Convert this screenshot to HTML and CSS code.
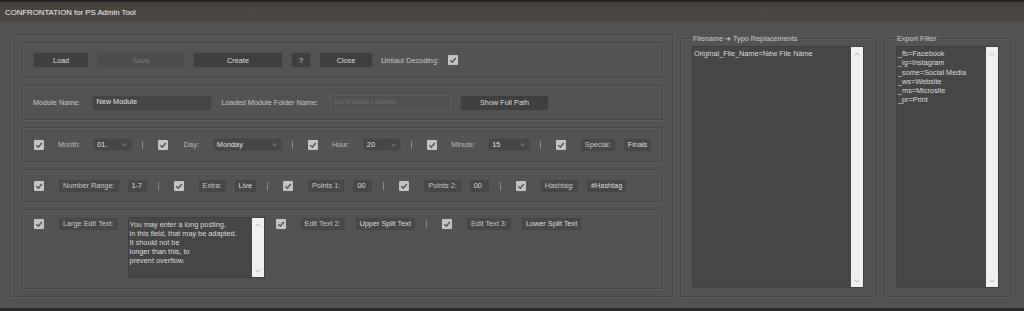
FILE: index.html
```html
<!DOCTYPE html>
<html lang="en">
<head>
    <meta charset="UTF-8">
    <title>CONFRONTATION for PS Admin Tool</title>
    <link rel="stylesheet" href="styles.css">
</head>
<body>
    <div class="titlebar">CONFRONTATION for PS Admin Tool</div>

    <div class="workspace">
        <div class="editor">
            <div class="row row-1">
                <button class="btn btn-load">Load</button>
                <button class="btn btn-save" disabled>Save</button>
                <button class="btn btn-create">Create</button>
                <button class="btn btn-help">?</button>
                <button class="btn btn-close">Close</button>
                <span class="label">Umlaut Decoding:</span>
                <span class="cb cb-umlaut"><svg viewBox="0 0 10 10"><polyline points="2.3,5.2 4.3,7.2 7.8,3"/></svg></span>
            </div>

            <div class="row row-2">
                <span class="label">Module Name:</span>
                <div class="field field-name">New Module</div>
                <span class="label">Loaded Module Folder Name:</span>
                <div class="field field-folder">No Module Loaded.</div>
                <button class="btn btn-path">Show Full Path</button>
            </div>

            <div class="row row-3">
                <span class="cb"><svg viewBox="0 0 10 10"><polyline points="2.3,5.2 4.3,7.2 7.8,3"/></svg></span>
                <span class="label opt">Month:</span>
                <div class="select sel-month">01.<svg viewBox="0 0 6 4"><polyline points="0.5,0.5 3,3 5.5,0.5"/></svg></div>
                <span class="sep"></span>
                <span class="cb"><svg viewBox="0 0 10 10"><polyline points="2.3,5.2 4.3,7.2 7.8,3"/></svg></span>
                <span class="label opt opt-day">Day:</span>
                <div class="select sel-day">Monday<svg viewBox="0 0 6 4"><polyline points="0.5,0.5 3,3 5.5,0.5"/></svg></div>
                <span class="sep"></span>
                <span class="cb"><svg viewBox="0 0 10 10"><polyline points="2.3,5.2 4.3,7.2 7.8,3"/></svg></span>
                <span class="label opt">Hour:</span>
                <div class="select sel-hour">20<svg viewBox="0 0 6 4"><polyline points="0.5,0.5 3,3 5.5,0.5"/></svg></div>
                <span class="sep"></span>
                <span class="cb"><svg viewBox="0 0 10 10"><polyline points="2.3,5.2 4.3,7.2 7.8,3"/></svg></span>
                <span class="label opt">Minute:</span>
                <div class="select sel-minute">15<svg viewBox="0 0 6 4"><polyline points="0.5,0.5 3,3 5.5,0.5"/></svg></div>
                <span class="sep"></span>
                <span class="cb"><svg viewBox="0 0 10 10"><polyline points="2.3,5.2 4.3,7.2 7.8,3"/></svg></span>
                <span class="tag">Special:</span>
                <span class="val">Finals</span>
            </div>

            <div class="row row-4">
                <span class="cb"><svg viewBox="0 0 10 10"><polyline points="2.3,5.2 4.3,7.2 7.8,3"/></svg></span>
                <span class="tag">Number Range:</span>
                <span class="val">1-7</span>
                <span class="sep"></span>
                <span class="cb"><svg viewBox="0 0 10 10"><polyline points="2.3,5.2 4.3,7.2 7.8,3"/></svg></span>
                <span class="tag">Extra:</span>
                <span class="val">Live</span>
                <span class="sep"></span>
                <span class="cb"><svg viewBox="0 0 10 10"><polyline points="2.3,5.2 4.3,7.2 7.8,3"/></svg></span>
                <span class="tag">Points 1:</span>
                <span class="val">00</span>
                <span class="sep"></span>
                <span class="cb"><svg viewBox="0 0 10 10"><polyline points="2.3,5.2 4.3,7.2 7.8,3"/></svg></span>
                <span class="tag">Points 2:</span>
                <span class="val">00</span>
                <span class="sep"></span>
                <span class="cb"><svg viewBox="0 0 10 10"><polyline points="2.3,5.2 4.3,7.2 7.8,3"/></svg></span>
                <span class="tag">Hashtag:</span>
                <span class="val">#Hashtag</span>
            </div>

            <div class="row row-5">
                <span class="cb"><svg viewBox="0 0 10 10"><polyline points="2.3,5.2 4.3,7.2 7.8,3"/></svg></span>
                <span class="tag">Large Edit Text:</span>
                <div class="textbox large-text">
                    <div class="textbox-body">You may enter a long posting,<br>in this field, that may be adapted.<br>It should not be<br>longer than this, to<br>prevent overflow.</div>
                    <div class="scrollbar">
                        <svg viewBox="0 0 6 4"><polyline points="0.5,3.5 3,1 5.5,3.5"/></svg>
                        <svg viewBox="0 0 6 4"><polyline points="0.5,0.5 3,3 5.5,0.5"/></svg>
                    </div>
                </div>
                <span class="cb"><svg viewBox="0 0 10 10"><polyline points="2.3,5.2 4.3,7.2 7.8,3"/></svg></span>
                <span class="tag">Edit Text 2:</span>
                <span class="val">Upper Split Text</span>
                <span class="sep"></span>
                <span class="cb"><svg viewBox="0 0 10 10"><polyline points="2.3,5.2 4.3,7.2 7.8,3"/></svg></span>
                <span class="tag">Edit Text 3:</span>
                <span class="val">Lower Split Text</span>
            </div>
        </div>

        <fieldset class="group group-typo">
            <legend>Filename ➜ Typo Replacements</legend>
            <div class="textbox">
                <div class="textbox-body">Original_File_Name=Néw File Náme</div>
                <div class="scrollbar">
                    <svg viewBox="0 0 6 4"><polyline points="0.5,3.5 3,1 5.5,3.5"/></svg>
                    <svg viewBox="0 0 6 4"><polyline points="0.5,0.5 3,3 5.5,0.5"/></svg>
                </div>
            </div>
        </fieldset>

        <fieldset class="group group-export">
            <legend>Export Filter</legend>
            <div class="textbox">
                <div class="textbox-body">_fb=Facebook<br>_ig=Instagram<br>_some=Social Media<br>_ws=Website<br>_ms=Microsite<br>_pr=Print</div>
                <div class="scrollbar">
                    <svg viewBox="0 0 6 4"><polyline points="0.5,3.5 3,1 5.5,3.5"/></svg>
                    <svg viewBox="0 0 6 4"><polyline points="0.5,0.5 3,3 5.5,0.5"/></svg>
                </div>
            </div>
        </fieldset>
    </div>

    <div class="footer"></div>
</body>
</html>
```

FILE: styles.css
```css
* {
    margin: 0;
    padding: 0;
    box-sizing: border-box;
}

body {
    background: #535353;
    font-family: "Liberation Sans", Arial, sans-serif;
    font-size: 7.3px;
    color: #cacaca;
    height: 311px;
    overflow: hidden;
    display: flex;
    flex-direction: column;
}

.titlebar {
    height: 22px;
    border-top: 2px solid #262626;
    background: linear-gradient(#48423d, #4c4743);
    color: #f2f2f2;
    font-size: 7.8px;
    padding-left: 5px;
    display: flex;
    align-items: center;
}

.workspace {
    display: flex;
    gap: 7px;
    padding: 12px 12px 0 10px;
    height: 275px;
}

/* panneaux avec double trait */
.editor,
.row,
.group {
    border: 1px solid #464646;
    box-shadow: inset 1px 1px 0 #5b5b5b, 1px 1px 0 #5b5b5b;
}

.editor {
    width: 663px;
    padding: 7px 9px 7px 11px;
    display: flex;
    flex-direction: column;
    gap: 7px;
}

.row {
    display: flex;
    align-items: center;
    padding: 0 10px;
}

.row-1 { height: 36px; gap: 8px; }
.row-2 { height: 35px; gap: 9px; }
.row-3 { height: 35px; }
.row-4 { height: 33px; }
.row-5 {
    flex: 1;
    align-items: flex-start;
    padding-top: 7px;
}

.label {
    color: #c8c8c8;
    white-space: nowrap;
}

.row-2 .label { padding-right: 3px; }

.opt {
    color: #bdbdbd;
    margin-right: 13px;
}

.opt-day {
    margin-left: 2px;
    margin-right: 14px;
}

/* boutons */
.btn {
    height: 16px;
    background: #3f3f3f;
    border: 1px solid #4f4f4f;
    color: #dedede;
    font-family: inherit;
    font-size: 7.3px;
}

.btn-load { width: 56px; }
.btn-save { width: 88px; background: #4c4c4c; color: #7c7c7c; border-color: #515151; }
.btn-create { width: 90px; }
.btn-help { width: 20px; }
.btn-close { width: 54px; }
.btn-path { width: 89px; }

.cb-umlaut { margin-left: 4px; }

/* case à cocher */
.cb {
    width: 10px;
    height: 10px;
    flex: none;
    background: #c4c4c4;
    border-radius: 1px;
    margin-left: 1px;
    margin-right: 14px;
    display: flex;
}

.row-1 .cb { margin-right: 0; }

.cb svg {
    width: 10px;
    height: 10px;
    fill: none;
    stroke: #555;
    stroke-width: 1.5;
}

.row-5 .cb { margin-top: 2px; }

/* champs */
.field {
    height: 16px;
    background: #454545;
    border: 1px solid #4d4d4d;
    color: #e2e2e2;
    padding: 1px 3px;
    white-space: nowrap;
}

.field-name { width: 120px; }

.field-folder {
    width: 121px;
    background: #515151;
    border-color: #5d5d5d;
    color: #6e6e6e;
}

.select {
    height: 13px;
    background: #464646;
    border: 1px solid #4c4c4c;
    color: #e2e2e2;
    padding-left: 3px;
    display: flex;
    align-items: center;
    justify-content: space-between;
}

.select svg {
    width: 5px;
    height: 4px;
    margin-right: 4px;
    fill: none;
    stroke: #9c9c9c;
    stroke-width: 1;
}

.sel-month { width: 39px; }
.sel-day { width: 70px; }
.sel-hour { width: 39px; }
.sel-minute { width: 42px; }

.sep {
    width: 1px;
    height: 8px;
    background: #8a8a8a;
    margin: 0 14px 0 10px;
}

.row-5 .sep { margin-top: 3px; }

.tag,
.val {
    height: 14px;
    line-height: 12px;
    padding: 0 4px;
    background: #474747;
    border: 1px solid #515151;
    white-space: nowrap;
}

.tag {
    color: #c8c8c8;
    margin-right: 7px;
}

.val {
    color: #dedede;
    min-width: 21px;
}

.row-5 .tag { margin-right: 9px; }
.row-5 .val { margin-right: 0; }

/* zones de texte */
.textbox {
    display: flex;
    background: #464646;
    border: 1px solid #404040;
}

.textbox-body {
    flex: 1;
    color: #dcdcdc;
    line-height: 9.3px;
    padding: 2px 1px;
    white-space: nowrap;
    overflow: hidden;
}

.scrollbar {
    width: 12px;
    background: #f0f0f0;
    display: flex;
    flex-direction: column;
    justify-content: space-between;
    align-items: center;
    padding: 5px 0 4px;
}

.scrollbar svg {
    width: 6px;
    height: 4px;
    fill: none;
    stroke: #b8b8b8;
    stroke-width: 1;
}

.large-text {
    width: 137px;
    height: 61px;
    margin-right: 10px;
}

.large-text .textbox-body { line-height: 9px; }

.group {
    padding: 3px 12px 8px 11px;
    display: flex;
    flex-direction: column;
    min-width: 0;
}

.group legend {
    padding: 0 1px;
    line-height: 9px;
    color: #cacaca;
}

.group .textbox { flex: 1; }

.group-typo { width: 197px; }
.group-export { width: 128px; }

.footer {
    margin-top: auto;
    height: 3px;
    background: #2a2a2a;
}
```
